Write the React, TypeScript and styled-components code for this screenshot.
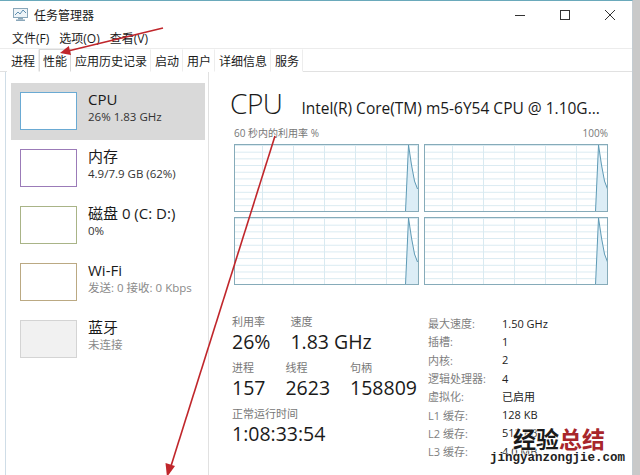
import React from 'react'
import styled, { createGlobalStyle } from 'styled-components'

const colors = {
  text: '#1a1a1a',
  muted: '#777777',
  line: '#e1e1e1',
  graphBorder: '#86abb9',
  graphGrid: '#d9eaf1',
  spike: '#5d9ab5',
  spikeFill: '#dcedf6',
  arrow: '#c0262b',
}

const GlobalStyle = createGlobalStyle`
  html, body { margin: 0; padding: 0; }
  body {
    width: 640px;
    height: 475px;
    overflow: hidden;
    background: #c9c9c9;
    font-family: "Open Sans", "Noto Sans CJK SC", sans-serif;
    color: ${colors.text};
  }
`

// Window frame
const Window = styled.div`
  position: relative;
  width: 633px;
  height: 475px;
  background: #fff;
  border-top: 1px solid #6aa9bb;
  border-right: 1px solid #c4ccd2;
  box-sizing: border-box;
  display: flex;
  flex-direction: column;
`

const TitleBar = styled.div`
  height: 27px;
  display: flex;
  align-items: center;
  padding-left: 13px;
  font-size: 12px;
`

const TitleText = styled.span`
  margin-left: 6px;
  flex: 1;
`

const WinButton = styled.div`
  width: 45px;
  height: 27px;
  display: flex;
  align-items: center;
  justify-content: center;
`

const MenuBar = styled.div`
  height: 20px;
  display: flex;
  align-items: center;
  gap: 10px;
  padding-left: 12px;
  font-size: 12px;
  border-bottom: 1px solid #ececec;
`

const TabBar = styled.div`
  height: 22px;
  display: flex;
  align-items: stretch;
  padding-left: 7px;
  border-bottom: 1px solid ${colors.line};
  font-size: 12px;
`

const Tab = styled.div<{ $active?: boolean }>`
  display: flex;
  align-items: center;
  padding: 0 3px;
  margin-bottom: -1px;
  border: 1px solid ${({ $active }) => ($active ? '#d9d9d9' : 'transparent')};
  border-bottom: 1px solid ${({ $active }) => ($active ? '#fff' : 'transparent')};
  border-right-color: ${({ $active }) => ($active ? '#d9d9d9' : '#ededed')};
  background: #fff;
`

// Body
const Body = styled.div`
  flex: 1;
  display: grid;
  grid-template-columns: 203px 1fr;
  margin-left: 5px;
  border-left: 1px solid #cfdde7;
`

const Sidebar = styled.div`
  display: flex;
  flex-direction: column;
  padding: 11px 3px 0 5px;
  border-right: 1px solid ${colors.line};
`

const SideItem = styled.div<{ $active?: boolean }>`
  height: 57px;
  display: flex;
  align-items: flex-start;
  gap: 11px;
  padding: 9px 0 0 9px;
  box-sizing: border-box;
  background: ${({ $active }) => ($active ? '#d9d9d9' : 'transparent')};
`

const Thumb = styled.div<{ $color: string; $fill?: string }>`
  width: 57px;
  height: 38px;
  flex: none;
  box-sizing: border-box;
  border: 1px solid ${({ $color }) => $color};
  background: ${({ $fill }) => $fill || '#fff'};
  position: relative;
`

const SideText = styled.div`
  display: flex;
  flex-direction: column;
  margin-top: -3px;
`

const SideTitle = styled.div`
  font-size: 15px;
  line-height: 20px;
`

const SideSub = styled.div<{ $muted?: boolean }>`
  font-size: 11.5px;
  line-height: 16px;
  color: ${({ $muted }) => ($muted ? '#8a8a8a' : '#333')};
`

const Main = styled.div`
  padding: 12px 0 0 21px;
  display: flex;
  flex-direction: column;
`

const Header = styled.div`
  display: flex;
  align-items: baseline;
  gap: 19px;
  height: 42px;
`

const BigTitle = styled.div`
  font-size: 28px;
  font-weight: 300;
  letter-spacing: -0.5px;
`

const Model = styled.div`
  font-size: 15.5px;
`

const GraphSection = styled.div`
  width: 374px;
  margin-left: 4px;
`

const GraphCaption = styled.div`
  display: flex;
  justify-content: space-between;
  font-size: 10px;
  color: ${colors.muted};
  height: 18px;
  line-height: 15px;
`

const GraphGrid = styled.div`
  display: grid;
  grid-template-columns: 1fr 1fr;
  gap: 5px;
`

const Graph = styled.div`
  height: 68px;
  box-sizing: border-box;
  border: 1px solid ${colors.graphBorder};
  background-image:
    linear-gradient(to right, ${colors.graphGrid} 1px, transparent 1px),
    linear-gradient(to bottom, ${colors.graphGrid} 1px, transparent 1px);
  background-size: 31px 100%, 100% 6.7px;
  background-position: 27px 0, 0 0;
  position: relative;
  overflow: hidden;
  svg { position: absolute; inset: 0; }
`

const Stats = styled.div`
  display: grid;
  grid-template-columns: 198px 1fr;
  margin-top: 29px;
`

const StatsLeft = styled.div`
  display: flex;
  flex-direction: column;
  gap: 6px;
  padding-left: 2px;
`

const StatRow = styled.div`
  display: flex;
  gap: 20px;
`

const Stat = styled.div`
  display: flex;
  flex-direction: column;
`

const StatLabel = styled.div`
  font-size: 11px;
  line-height: 15px;
  color: ${colors.muted};
`

const StatValue = styled.div`
  font-size: 19.5px;
  line-height: 25px;
`

const SpecTable = styled.div`
  display: grid;
  grid-template-columns: 74px 1fr;
  grid-auto-rows: 18.3px;
  align-items: center;
  font-size: 11px;
`

const SpecLabel = styled.div`
  color: #7f7f7f;
`

const SpecValue = styled.div`
  color: #222;
`

// Overlays
const Annotations = styled.svg`
  position: absolute;
  left: 0;
  top: 0;
  pointer-events: none;
`

const Watermark = styled.div`
  position: absolute;
  left: 490px;
  top: 426px;
  display: flex;
  flex-direction: column;
  align-items: flex-end;
  text-shadow: 0 0 2px #fff, 0 0 2px #fff, 0 0 3px #fff;
`

const MarkBig = styled.div`
  font-family: "Noto Sans CJK SC", sans-serif;
  font-weight: 700;
  font-size: 23px;
  line-height: 25px;
  padding-right: 20px;
  color: #1a1a1a;
  span { color: #a8262b; }
`

const MarkSmall = styled.div`
  font-family: "Liberation Mono", monospace;
  font-weight: 700;
  font-size: 12.5px;
  line-height: 14px;
  color: #222;
`

const sideItems = [
  { title: 'CPU', sub: '26% 1.83 GHz', color: '#6aaad3', active: true },
  { title: '内存', sub: '4.9/7.9 GB (62%)', color: '#9b7bb8' },
  { title: '磁盘 0 (C: D:)', sub: '0%', color: '#a9b487' },
  { title: 'Wi-Fi', sub: '发送: 0 接收: 0 Kbps', color: '#bba983', muted: true },
  { title: '蓝牙', sub: '未连接', color: '#d4d4d4', fill: '#f1f1f1', muted: true },
]

const specs = [
  ['最大速度:', '1.50 GHz'],
  ['插槽:', '1'],
  ['内核:', '2'],
  ['逻辑处理器:', '4'],
  ['虚拟化:', '已启用'],
  ['L1 缓存:', '128 KB'],
  ['L2 缓存:', '512 KB'],
  ['L3 缓存:', '4.0 MB'],
]

const tabs = ['进程', '性能', '应用历史记录', '启动', '用户', '详细信息', '服务']

function AppIcon() {
  return (
    <svg width="15" height="13" viewBox="0 0 15 13">
      <rect x="0.5" y="0.5" width="14" height="9" fill="#eef4f8" stroke="#8aa7ba" />
      <polyline points="2,7 5,4 7,6 10,2 13,5" fill="none" stroke="#5f8fb0" strokeWidth="1" />
      <rect x="5" y="10" width="5" height="1.5" fill="#8aa7ba" />
      <rect x="3" y="11.5" width="9" height="1.5" fill="#8aa7ba" />
    </svg>
  )
}

function Spike() {
  return (
    <svg width="100%" height="100%" viewBox="0 0 183 66" preserveAspectRatio="none">
      <polygon points="171,66 174,0 177,20 180,36 183,44 183,66" fill={colors.spikeFill} />
      <polyline points="171,66 174,0 177,20 180,36 183,44" fill="none" stroke={colors.spike} strokeWidth="1" />
    </svg>
  )
}

export default function App() {
  return (
    <>
      <GlobalStyle />
      <Window>
        <TitleBar>
          <AppIcon />
          <TitleText>任务管理器</TitleText>
          <WinButton>
            <svg width="10" height="10"><line x1="0" y1="5.5" x2="10" y2="5.5" stroke="#333" /></svg>
          </WinButton>
          <WinButton>
            <svg width="10" height="10"><rect x="0.5" y="0.5" width="9" height="9" fill="none" stroke="#333" /></svg>
          </WinButton>
          <WinButton>
            <svg width="10" height="10">
              <line x1="0" y1="0" x2="10" y2="10" stroke="#333" />
              <line x1="10" y1="0" x2="0" y2="10" stroke="#333" />
            </svg>
          </WinButton>
        </TitleBar>
        <MenuBar>
          <span>文件(F)</span>
          <span>选项(O)</span>
          <span>查看(V)</span>
        </MenuBar>
        <TabBar>
          {tabs.map((t) => (
            <Tab key={t} $active={t === '性能'}>{t}</Tab>
          ))}
        </TabBar>
        <Body>
          <Sidebar>
            {sideItems.map((it) => (
              <SideItem key={it.title} $active={it.active}>
                <Thumb $color={it.color} $fill={it.fill} />
                <SideText>
                  <SideTitle>{it.title}</SideTitle>
                  <SideSub $muted={it.muted}>{it.sub}</SideSub>
                </SideText>
              </SideItem>
            ))}
          </Sidebar>
          <Main>
            <Header>
              <BigTitle>CPU</BigTitle>
              <Model>Intel(R) Core(TM) m5-6Y54 CPU @ 1.10G...</Model>
            </Header>
            <GraphSection>
              <GraphCaption>
                <span>60 秒内的利用率 %</span>
                <span>100%</span>
              </GraphCaption>
              <GraphGrid>
                {[0, 1, 2, 3].map((i) => (
                  <Graph key={i}><Spike /></Graph>
                ))}
              </GraphGrid>
            </GraphSection>
            <Stats>
              <StatsLeft>
                <StatRow>
                  <Stat><StatLabel>利用率</StatLabel><StatValue>26%</StatValue></Stat>
                  <Stat><StatLabel>速度</StatLabel><StatValue>1.83 GHz</StatValue></Stat>
                </StatRow>
                <StatRow>
                  <Stat><StatLabel>进程</StatLabel><StatValue>157</StatValue></Stat>
                  <Stat><StatLabel>线程</StatLabel><StatValue>2623</StatValue></Stat>
                  <Stat><StatLabel>句柄</StatLabel><StatValue>158809</StatValue></Stat>
                </StatRow>
                <StatRow>
                  <Stat><StatLabel>正常运行时间</StatLabel><StatValue>1:08:33:54</StatValue></Stat>
                </StatRow>
              </StatsLeft>
              <SpecTable>
                {specs.map(([k, v]) => (
                  <React.Fragment key={k}>
                    <SpecLabel>{k}</SpecLabel>
                    <SpecValue>{v}</SpecValue>
                  </React.Fragment>
                ))}
              </SpecTable>
            </Stats>
          </Main>
        </Body>
      </Window>
      <Watermark>
        <MarkBig>经验<span>总结</span></MarkBig>
        <MarkSmall>jingyanzongjie.com</MarkSmall>
      </Watermark>
      <Annotations width="640" height="475" viewBox="0 0 640 475">
        <line x1="163" y1="28" x2="68" y2="51" stroke={colors.arrow} strokeWidth="1.6" />
        <polygon points="60,53 68.8,46 71,55" fill={colors.arrow} />
        <line x1="275" y1="136" x2="171" y2="466" stroke={colors.arrow} strokeWidth="1.6" />
        <polygon points="167,477 165.5,463 175,466" fill={colors.arrow} />
      </Annotations>
    </>
  )
}
